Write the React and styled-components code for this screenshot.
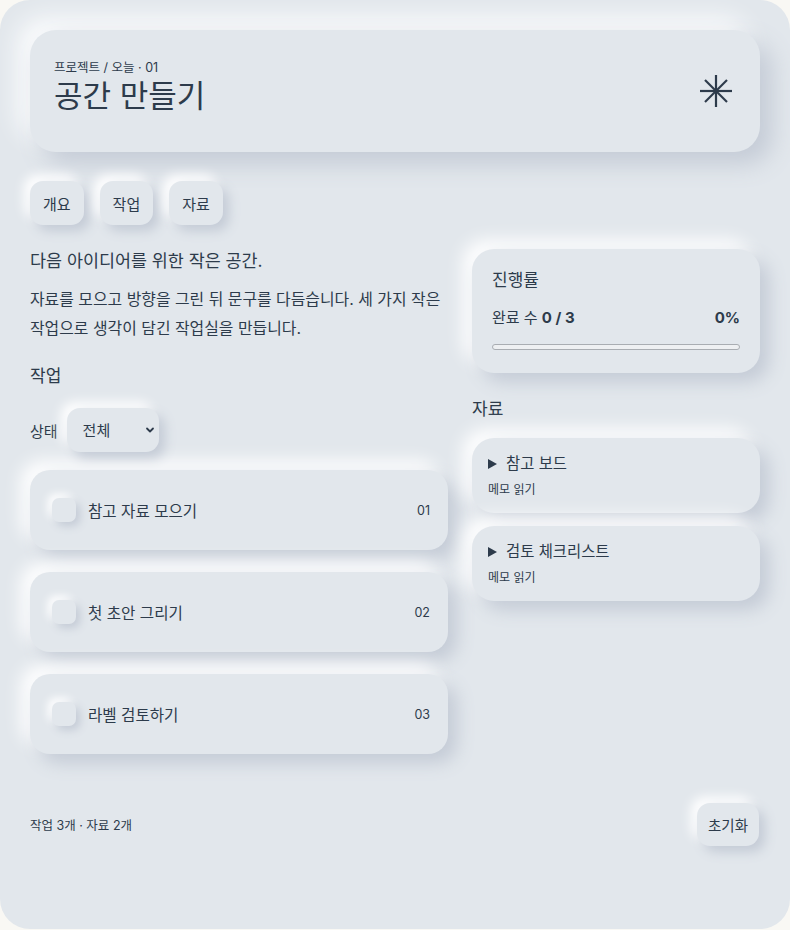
import styled, { createGlobalStyle } from "styled-components";
import { ChevronDown } from "lucide-react";

const tasks = [
  { id: "01", label: "참고 자료 모으기" },
  { id: "02", label: "첫 초안 그리기" },
  { id: "03", label: "라벨 검토하기" },
];

const resources = [
  { title: "참고 보드", note: "메모 읽기" },
  { title: "검토 체크리스트", note: "메모 읽기" },
];

function Spark() {
  return (
    <svg width="36" height="36" viewBox="0 0 36 36" fill="none" stroke="currentColor" strokeWidth="2.2" strokeLinecap="butt">
      <line x1="18" y1="2" x2="18" y2="34" />
      <line x1="2" y1="18" x2="34" y2="18" />
      <line x1="7" y1="7" x2="29" y2="29" />
      <line x1="29" y1="7" x2="7" y2="29" />
    </svg>
  );
}

function App() {
  return (
    <>
      <GlobalStyle />
      <Shell>
        <Header>
          <div>
            <Crumb>프로젝트 / 오늘 · 01</Crumb>
            <Title>공간 만들기</Title>
          </div>
          <Spark />
        </Header>

        <Tabs>
          <Tab>개요</Tab>
          <Tab>작업</Tab>
          <Tab>자료</Tab>
        </Tabs>

        <Columns>
          <Main>
            <Lead>다음 아이디어를 위한 작은 공간.</Lead>
            <Body>
              자료를 모으고 방향을 그린 뒤 문구를 다듬습니다. 세 가지 작은
              작업으로 생각이 담긴 작업실을 만듭니다.
            </Body>
            <SectionTitle $top={21}>작업</SectionTitle>
            <Filter>
              상태
              <SelectWrap>
                <Select defaultValue="all">
                  <option value="all">전체</option>
                  <option value="open">진행 중</option>
                  <option value="done">완료</option>
                </Select>
                <ChevronDown size={12} strokeWidth={3.6} />
              </SelectWrap>
            </Filter>
            <TaskList>
              {tasks.map((t) => (
                <Task key={t.id}>
                  <Check />
                  <TaskLabel>{t.label}</TaskLabel>
                  <TaskNo>{t.id}</TaskNo>
                </Task>
              ))}
            </TaskList>
          </Main>

          <Side>
            <Progress>
              <ProgressTitle>진행률</ProgressTitle>
              <ProgressRow>
                <span>
                  완료 수 <strong>0 / 3</strong>
                </span>
                <strong>0%</strong>
              </ProgressRow>
              <Bar>
                <Fill style={{ width: "0%" }} />
              </Bar>
            </Progress>
            <SectionTitle $top={24}>자료</SectionTitle>
            <ResList>
              {resources.map((r) => (
                <Res key={r.title}>
                  <ResTitle>
                    <Tri />
                    {r.title}
                  </ResTitle>
                  <ResNote>{r.note}</ResNote>
                </Res>
              ))}
            </ResList>
          </Side>
        </Columns>

        <Footer>
          <Count>작업 3개 · 자료 2개</Count>
          <Reset>초기화</Reset>
        </Footer>
      </Shell>
    </>
  );
}

export default App;

const GlobalStyle = createGlobalStyle`
  * { box-sizing: border-box; }
  body {
    margin: 0;
    background: #f9f8f4;
    font-family: Inter, "Noto Sans CJK KR", sans-serif;
    color: #2d3b4b;
    word-break: keep-all;
  }
`;

const raised = `
  background: #e2e7ec;
  box-shadow: 9px 9px 18px #c4cbd6, -9px -9px 18px #ffffff;
`;

const Shell = styled.div`
  width: 790px;
  min-height: 929px;
  background: #e2e7ec;
  border-radius: 30px;
  padding: 30px 30px 40px;
`;

const Header = styled.header`
  ${raised}
  box-shadow: 12px 12px 24px #c4cbd6, -12px -12px 24px #fbfcfd;
  border-radius: 26px;
  height: 122px;
  padding: 0 26px 0 24px;
  display: flex;
  align-items: center;
  justify-content: space-between;
  color: #2d3b4b;
`;

const Crumb = styled.div`
  font-size: 12.5px;
  line-height: 16px;
  margin-top: -6px;
`;

const Title = styled.h1`
  margin: 0;
  font-size: 31px;
  line-height: 40px;
  font-weight: 400;
`;

const Tabs = styled.nav`
  display: flex;
  gap: 16px;
  margin-top: 29px;
`;

const Tab = styled.button`
  ${raised}
  box-shadow: 6px 6px 12px #c4cbd6, -6px -6px 12px #ffffff;
  border: 0;
  border-radius: 13px;
  height: 44px;
  padding: 0 13px;
  font: inherit;
  font-size: 15px;
  color: #2d3b4b;
`;

const Columns = styled.div`
  display: grid;
  grid-template-columns: 418px 288px;
  gap: 24px;
  margin-top: 24px;
  align-items: start;
`;

const Main = styled.section`
  display: flex;
  flex-direction: column;
`;

const Lead = styled.p`
  margin: 0;
  font-size: 17.4px;
  line-height: 24px;
`;

const Body = styled.p`
  margin: 12px 0 0;
  font-size: 15.9px;
  line-height: 29px;
`;

const SectionTitle = styled.h2`
  margin: ${(p) => p.$top}px 0 0;
  font-size: 17px;
  line-height: 24px;
  font-weight: 400;
`;

const Filter = styled.label`
  display: flex;
  align-items: center;
  gap: 9px;
  margin-top: 20px;
  font-size: 15px;
`;

const SelectWrap = styled.div`
  position: relative;
  display: flex;
  align-items: center;

  svg {
    position: absolute;
    right: 3px;
    pointer-events: none;
  }
`;

const Select = styled.select`
  ${raised}
  box-shadow: 6px 6px 12px #c4cbd6, -6px -6px 12px #ffffff;
  appearance: none;
  border: 0;
  border-radius: 13px;
  width: 92px;
  height: 44px;
  padding: 0 16px;
  font: inherit;
  font-size: 15px;
  color: #2d3b4b;
`;

const TaskList = styled.div`
  display: flex;
  flex-direction: column;
  gap: 22px;
  margin-top: 18px;
`;

const Task = styled.div`
  ${raised}
  border-radius: 20px;
  height: 80px;
  padding: 0 18px 0 22px;
  display: flex;
  align-items: center;
`;

const Check = styled.span`
  width: 24px;
  height: 24px;
  border-radius: 7px;
  background: #e2e7ec;
  box-shadow: 4px 4px 8px #c4cbd6, -4px -4px 8px #ffffff;
  flex: none;
`;

const TaskLabel = styled.span`
  margin-left: 12px;
  font-size: 15.6px;
  flex: 1;
`;

const TaskNo = styled.span`
  font-size: 12.5px;
`;

const Side = styled.aside`
  display: flex;
  flex-direction: column;
`;

const Progress = styled.div`
  ${raised}
  border-radius: 22px;
  padding: 19px 20px 23px;
`;

const ProgressTitle = styled.div`
  font-size: 17px;
  line-height: 24px;
`;

const ProgressRow = styled.div`
  display: flex;
  justify-content: space-between;
  align-items: center;
  margin-top: 15px;
  font-size: 15px;
  line-height: 22px;

  strong {
    font-weight: 700;
  }
`;

const Bar = styled.div`
  margin-top: 15px;
  height: 6px;
  border: 1px solid #a9adb2;
  border-radius: 4px;
  background: #eef0f2;
  overflow: hidden;
`;

const Fill = styled.div`
  height: 100%;
  background: #2d3b4b;
`;

const ResList = styled.div`
  display: flex;
  flex-direction: column;
  gap: 13px;
  margin-top: 17px;
`;

const Res = styled.div`
  ${raised}
  border-radius: 22px;
  padding: 15px 16px 14px;
`;

const ResTitle = styled.div`
  display: flex;
  align-items: center;
  gap: 9px;
  font-size: 15.4px;
  line-height: 22px;
`;

const Tri = styled.span`
  width: 0;
  height: 0;
  border-top: 5px solid transparent;
  border-bottom: 5px solid transparent;
  border-left: 9px solid #2d3b4b;
`;

const ResNote = styled.div`
  margin-top: 6px;
  font-size: 12px;
  line-height: 18px;
`;

const Footer = styled.footer`
  display: flex;
  justify-content: space-between;
  align-items: center;
  margin-top: 49px;
`;

const Count = styled.span`
  font-size: 12.5px;
`;

const Reset = styled.button`
  ${raised}
  box-shadow: 6px 6px 12px #c4cbd6, -6px -6px 12px #ffffff;
  border: 0;
  border-radius: 13px;
  height: 43px;
  padding: 0 11px;
  margin-right: 1px;
  font: inherit;
  font-size: 14.5px;
  color: #2d3b4b;
`;
